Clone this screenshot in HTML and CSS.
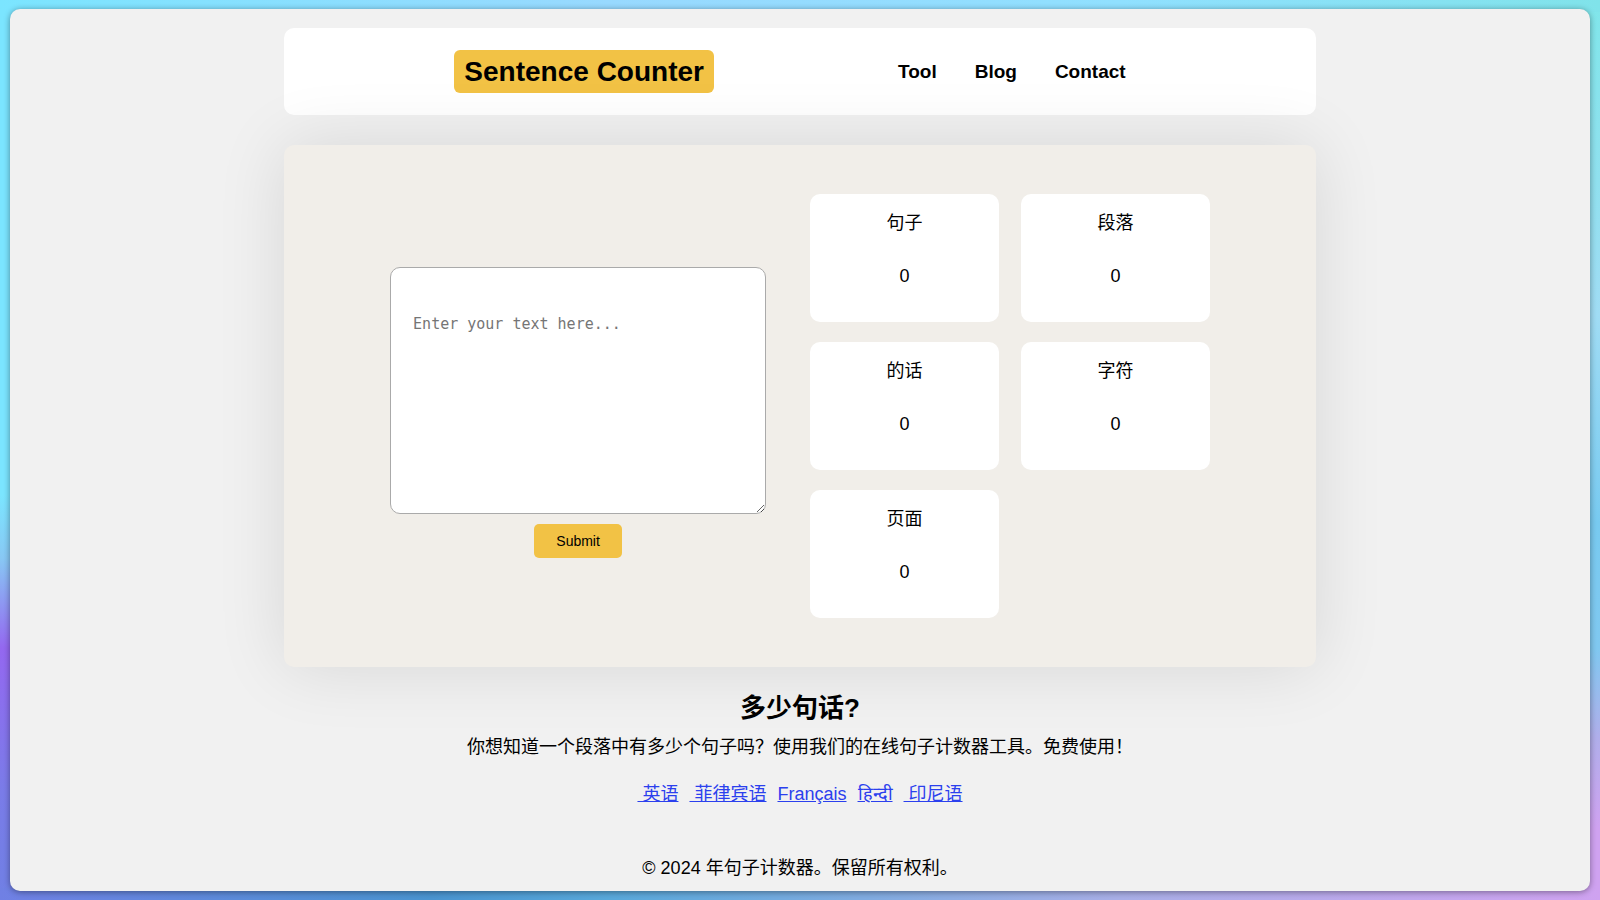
FILE: index.html
```
<!DOCTYPE html>
<html lang="zh-CN">
<head>
  <meta charset="UTF-8" />
  <meta name="viewport" content="width=device-width, initial-scale=1.0" />
  <title>Sentence Counter</title>
  <link rel="stylesheet" href="styles.css">
</head>
<body>
  <div class="page">
    <header class="navbar">
      <h1 class="logo">Sentence Counter</h1>
      <nav class="nav-links">
        <a href="#">Tool</a>
        <a href="#">Blog</a>
        <a href="#">Contact</a>
      </nav>
    </header>

    <main class="tool">
      <form class="text-form" id="textForm">
        <textarea id="text" aria-label="Text" placeholder="Enter your text here..."></textarea>
        <button type="submit" class="submit">Submit</button>
      </form>
      <div class="results">
        <div class="card"><p>句子</p><p id="sentences">0</p></div>
        <div class="card"><p>段落</p><p id="paragraphs">0</p></div>
        <div class="card"><p>的话</p><p id="words">0</p></div>
        <div class="card"><p>字符</p><p id="characters">0</p></div>
        <div class="card"><p>页面</p><p id="pages">0</p></div>
      </div>
    </main>

    <section class="about">
      <h2>多少句话?</h2>
      <p>你想知道一个段落中有多少个句子吗？使用我们的在线句子计数器工具。免费使用！</p>
    </section>

    <div class="languages">
      <a href="#">&nbsp;英语</a>
      <a href="#">&nbsp;菲律宾语</a>
      <a href="#">Français</a>
      <a href="#">हिन्दी</a>
      <a href="#">&nbsp;印尼语</a>
    </div>

    <footer>© 2024 年句子计数器。保留所有权利。</footer>
  </div>

  <script>
    const form = document.getElementById('textForm');

    function show(id, value) {
      document.getElementById(id).textContent = value;
    }

    form.addEventListener('submit', (e) => {
      e.preventDefault();
      const text = document.getElementById('text').value;
      const words = text.split(/\s+/).filter(Boolean).length;

      show('sentences', text.split(/[.!?。！？]+/).filter((s) => s.trim()).length);
      show('paragraphs', text.split(/\n+/).filter((s) => s.trim()).length);
      show('words', words);
      show('characters', text.length);
      show('pages', Math.ceil(words / 500));
    });
  </script>
</body>
</html>
```
FILE: styles.css
```
:root {
  --bg: #f1f1f1;
  --panel: #f1eee9;
  --accent: #f2c245;
  --link: #2b40ee;
}

* {
  box-sizing: border-box;
}

/* === COLOURED BACKDROP === */
body {
  margin: 0;
  min-height: 100vh;
  padding: 9px 10px;
  display: flex;
  font-family: 'Liberation Sans', 'Noto Sans CJK SC', sans-serif;
  font-size: 18px;
  line-height: 24px;
  color: #000;
  /* top, bottom and left edge strips, the last layer shows on the right */
  background:
    linear-gradient(90deg, #7be5ff, #98d9ff 38%, #90e0ff 70%, #80e3ea) top / 100% 12px no-repeat,
    linear-gradient(90deg, #7080e4, #4a94d0 27%, #58a8da 38%, #a8aee6 70%, #cfa2f0) bottom / 100% 12px no-repeat,
    linear-gradient(180deg, #7be5ff 55%, #88c8f4 62%, #9468f0 72%, #7a7ce8 88%, #7080e4) left / 20px 100% no-repeat,
    linear-gradient(180deg, #80e6ea, #90e0ee 20%, #a0dcf4 35%, #78caf0 58%, #80c8f0 72%, #b0aeea 82%, #cfa2f0 92%);
}

.page {
  flex: 1;
  padding: 19px 20px 8px;
  display: flex;
  flex-direction: column;
  align-items: center;
  background: var(--bg);
  border-radius: 10px;
  box-shadow: 0 1px 6px rgba(0, 0, 0, 0.4);
}

/* === NAVIGATION === */
.navbar {
  width: 67%;
  padding: 22px 20px 22px 0;
  display: flex;
  justify-content: center;
  gap: 184px;
  align-items: center;
  background: #fff;
  border-radius: 10px;
}

.logo {
  margin: 0;
  padding: 4px 10px;
  font-size: 28px;
  line-height: 35px;
  background: var(--accent);
  border-radius: 6px;
}

.nav-links {
  display: flex;
  gap: 38px;
}

.nav-links a {
  font-size: 19px;
  font-weight: bold;
  color: #000;
  text-decoration: none;
}

/* === COUNTER === */
.tool {
  width: 67%;
  margin-top: 30px;
  padding: 49px 106px;
  display: grid;
  grid-template-columns: 376px 400px;
  justify-content: space-between;
  align-items: center;
  background: var(--panel);
  border-radius: 10px;
  box-shadow: 0 0 70px rgba(0, 0, 0, 0.11);
}

.text-form {
  padding-top: 12px;
  display: flex;
  flex-direction: column;
  align-items: center;
  gap: 10px;
}

.text-form textarea {
  width: 100%;
  height: 247px;
  padding: 47px 22px;
  font-family: 'DejaVu Sans Mono', monospace;
  font-size: 15px;
  border: 1px solid #aaa;
  border-radius: 10px;
}

.submit {
  padding: 7px 22px;
  font-family: inherit;
  font-size: 14px;
  line-height: 20px;
  color: #000;
  background: var(--accent);
  border: none;
  border-radius: 5px;
  cursor: pointer;
}

.results {
  display: grid;
  grid-template-columns: 1fr 1fr;
  gap: 20px 22px;
}

.card {
  height: 128px;
  padding: 17px;
  text-align: center;
  background: #fff;
  border-radius: 10px;
}

.card p {
  margin: 0 0 29px;
}

/* === TEXT BELOW THE COUNTER === */
.about {
  margin-top: 24px;
  text-align: center;
}

.about h2 {
  margin: 0;
  font-size: 26px;
  line-height: 34px;
}

.about p {
  margin: 10px 0 0;
}

.languages {
  margin-top: 23px;
  display: flex;
  gap: 11px;
}

.languages a {
  color: var(--link);
}

footer {
  margin-top: 50px;
}
```
